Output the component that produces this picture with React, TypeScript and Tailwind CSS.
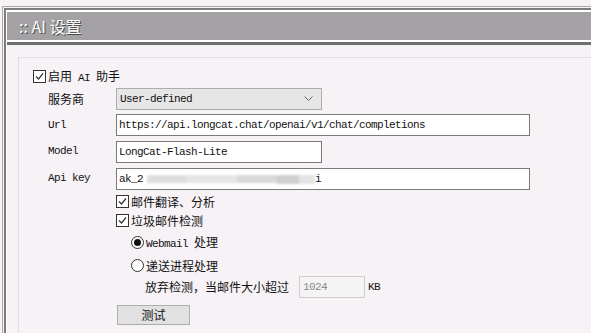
const mono = "font-['Liberation_Mono',monospace] text-[11px] tracking-[-0.6px] text-[#111]";
const cjk = "font-['Noto_Sans_CJK_SC','Noto_Sans',sans-serif] text-[12px] text-[#111]";

function Check() {
  return (
    <svg width="13" height="13" viewBox="0 0 13 13" className="shrink-0">
      <rect x="0.5" y="0.5" width="12" height="12" fill="white" stroke="#333" />
      <path d="M3 6.5 L5.5 9 L10 3.5" fill="none" stroke="#333" strokeWidth="1.2" />
    </svg>
  );
}

function Radio({ on }: { on?: boolean }) {
  return (
    <svg width="13" height="13" viewBox="0 0 13 13" className="shrink-0">
      <circle cx="6.5" cy="6.5" r="6" fill="white" stroke="#333" />
      {on && <circle cx="6.5" cy="6.5" r="3.5" fill="#111" />}
    </svg>
  );
}

function Label({ children, mono: m }: { children: React.ReactNode; mono?: boolean }) {
  return <div className={`flex items-center h-[22px] ${m ? mono : cjk}`}>{children}</div>;
}

export default function App() {
  return (
    <div className="w-[591px] h-[333px] overflow-hidden bg-[#f6f2f6]">
      <div className="ml-[2px] mt-[6px] border-l border-t border-[#a8a8a8] h-[330px]">
        <div className="ml-[1px] mt-px border-l-2 border-t-2 border-[#7d7d7d] h-full">
          <div className="border-l border-t-2 border-white h-full">
            {/* header */}
            <div className="h-[28px] bg-[#a4a2a4] flex items-center pl-3">
              <span className="font-['Noto_Sans_CJK_SC','Noto_Sans',sans-serif] text-[16px] text-white [text-shadow:1px_1px_0_#4a4a4a]">
                :: AI 设置
              </span>
            </div>
            <div className="h-[2px] bg-white" />
            <div className="h-[3px] bg-[#6e6e6e]" />

            {/* fieldset */}
            <div className="ml-[11px] mt-[12px] border-l border-t border-[#e2dce2] h-[300px] pl-[14px] pt-[12px]">
              <div className="flex items-center gap-[2px] h-[13px]">
                <Check />
                <span className={cjk}>
                  启用<span className={mono}> AI </span>助手
                </span>
              </div>

              <div className="grid grid-cols-[68px_auto] gap-y-[4px] mt-[5px] pl-[15px] justify-start">
                <Label>服务商</Label>
                <div className="w-[206px] h-[22px] bg-[#e6e6e6] border border-[#adadad] flex items-center justify-between pl-[3px] pr-[8px]">
                  <span className={mono}>User-defined</span>
                  <svg width="9" height="6" viewBox="0 0 9 6">
                    <polyline points="0.5,0.5 4.5,4.5 8.5,0.5" fill="none" stroke="#666" />
                  </svg>
                </div>

                <Label mono>Url</Label>
                <div className="w-[414px] h-[22px] bg-white border border-[#7a7a7a] flex items-center pl-[2px]">
                  <span className={mono}>https://api.longcat.chat/openai/v1/chat/completions</span>
                </div>

                <Label mono>Model</Label>
                <div className="w-[206px] h-[22px] bg-white border border-[#7a7a7a] flex items-center pl-[2px] mt-px">
                  <span className={mono}>LongCat-Flash-Lite</span>
                </div>

                <Label mono>Api key</Label>
                <div className="w-[414px] h-[22px] bg-white border border-[#7a7a7a] flex items-center pl-[2px] mt-px">
                  <span className={mono}>ak_2</span>
                  <span className="flex items-center h-[10px] ml-[4px] blur-[1px]">
                    <span className="w-[40px] h-[8px] bg-[#dedede]" />
                    <span className="w-[50px] h-[8px] bg-[#e6e6e6]" />
                    <span className="w-[40px] h-[8px] bg-[#d9d9d9]" />
                    <span className="w-[22px] h-[9px] bg-[#cfcfcf]" />
                    <span className="w-[16px] h-[9px] bg-[#e4e4e4]" />
                  </span>
                  <span className={mono}>i</span>
                </div>
              </div>

              <div className="pl-[83px]">
                <div className="flex items-center gap-[2px] h-[13px] mt-[5px]">
                  <Check />
                  <span className={cjk}>邮件翻译、分析</span>
                </div>
                <div className="flex items-center gap-[2px] h-[13px] mt-[6px]">
                  <Check />
                  <span className={cjk}>垃圾邮件检测</span>
                </div>
                <div className="flex items-center gap-[2px] h-[13px] mt-[9px] ml-[15px]">
                  <Radio on />
                  <span className={cjk}>
                    <span className={mono}>Webmail </span>处理
                  </span>
                </div>
                <div className="flex items-center gap-[2px] h-[13px] mt-[10px] ml-[15px]">
                  <Radio />
                  <span className={cjk}>递送进程处理</span>
                </div>
                <div className="flex items-center h-[22px] mt-[4px] ml-[29px]">
                  <span className={cjk}>放弃检测，当邮件大小超过</span>
                  <div className="ml-[10px] w-[66px] h-[22px] bg-[#f4f4f4] border border-[#cccccc] flex items-center pl-[3px]">
                    <span className="font-['Liberation_Mono',monospace] text-[11px] tracking-[-0.6px] text-[#8a8a8a]">1024</span>
                  </div>
                  <span className={`${mono} ml-[3px]`}>KB</span>
                </div>
                <div className="mt-[7px] ml-px w-[73px] h-[20px] bg-[#e1e1e1] border border-[#adadad] flex items-center justify-center">
                  <span className={cjk}>测试</span>
                </div>
              </div>
            </div>
          </div>
        </div>
      </div>
    </div>
  );
}
